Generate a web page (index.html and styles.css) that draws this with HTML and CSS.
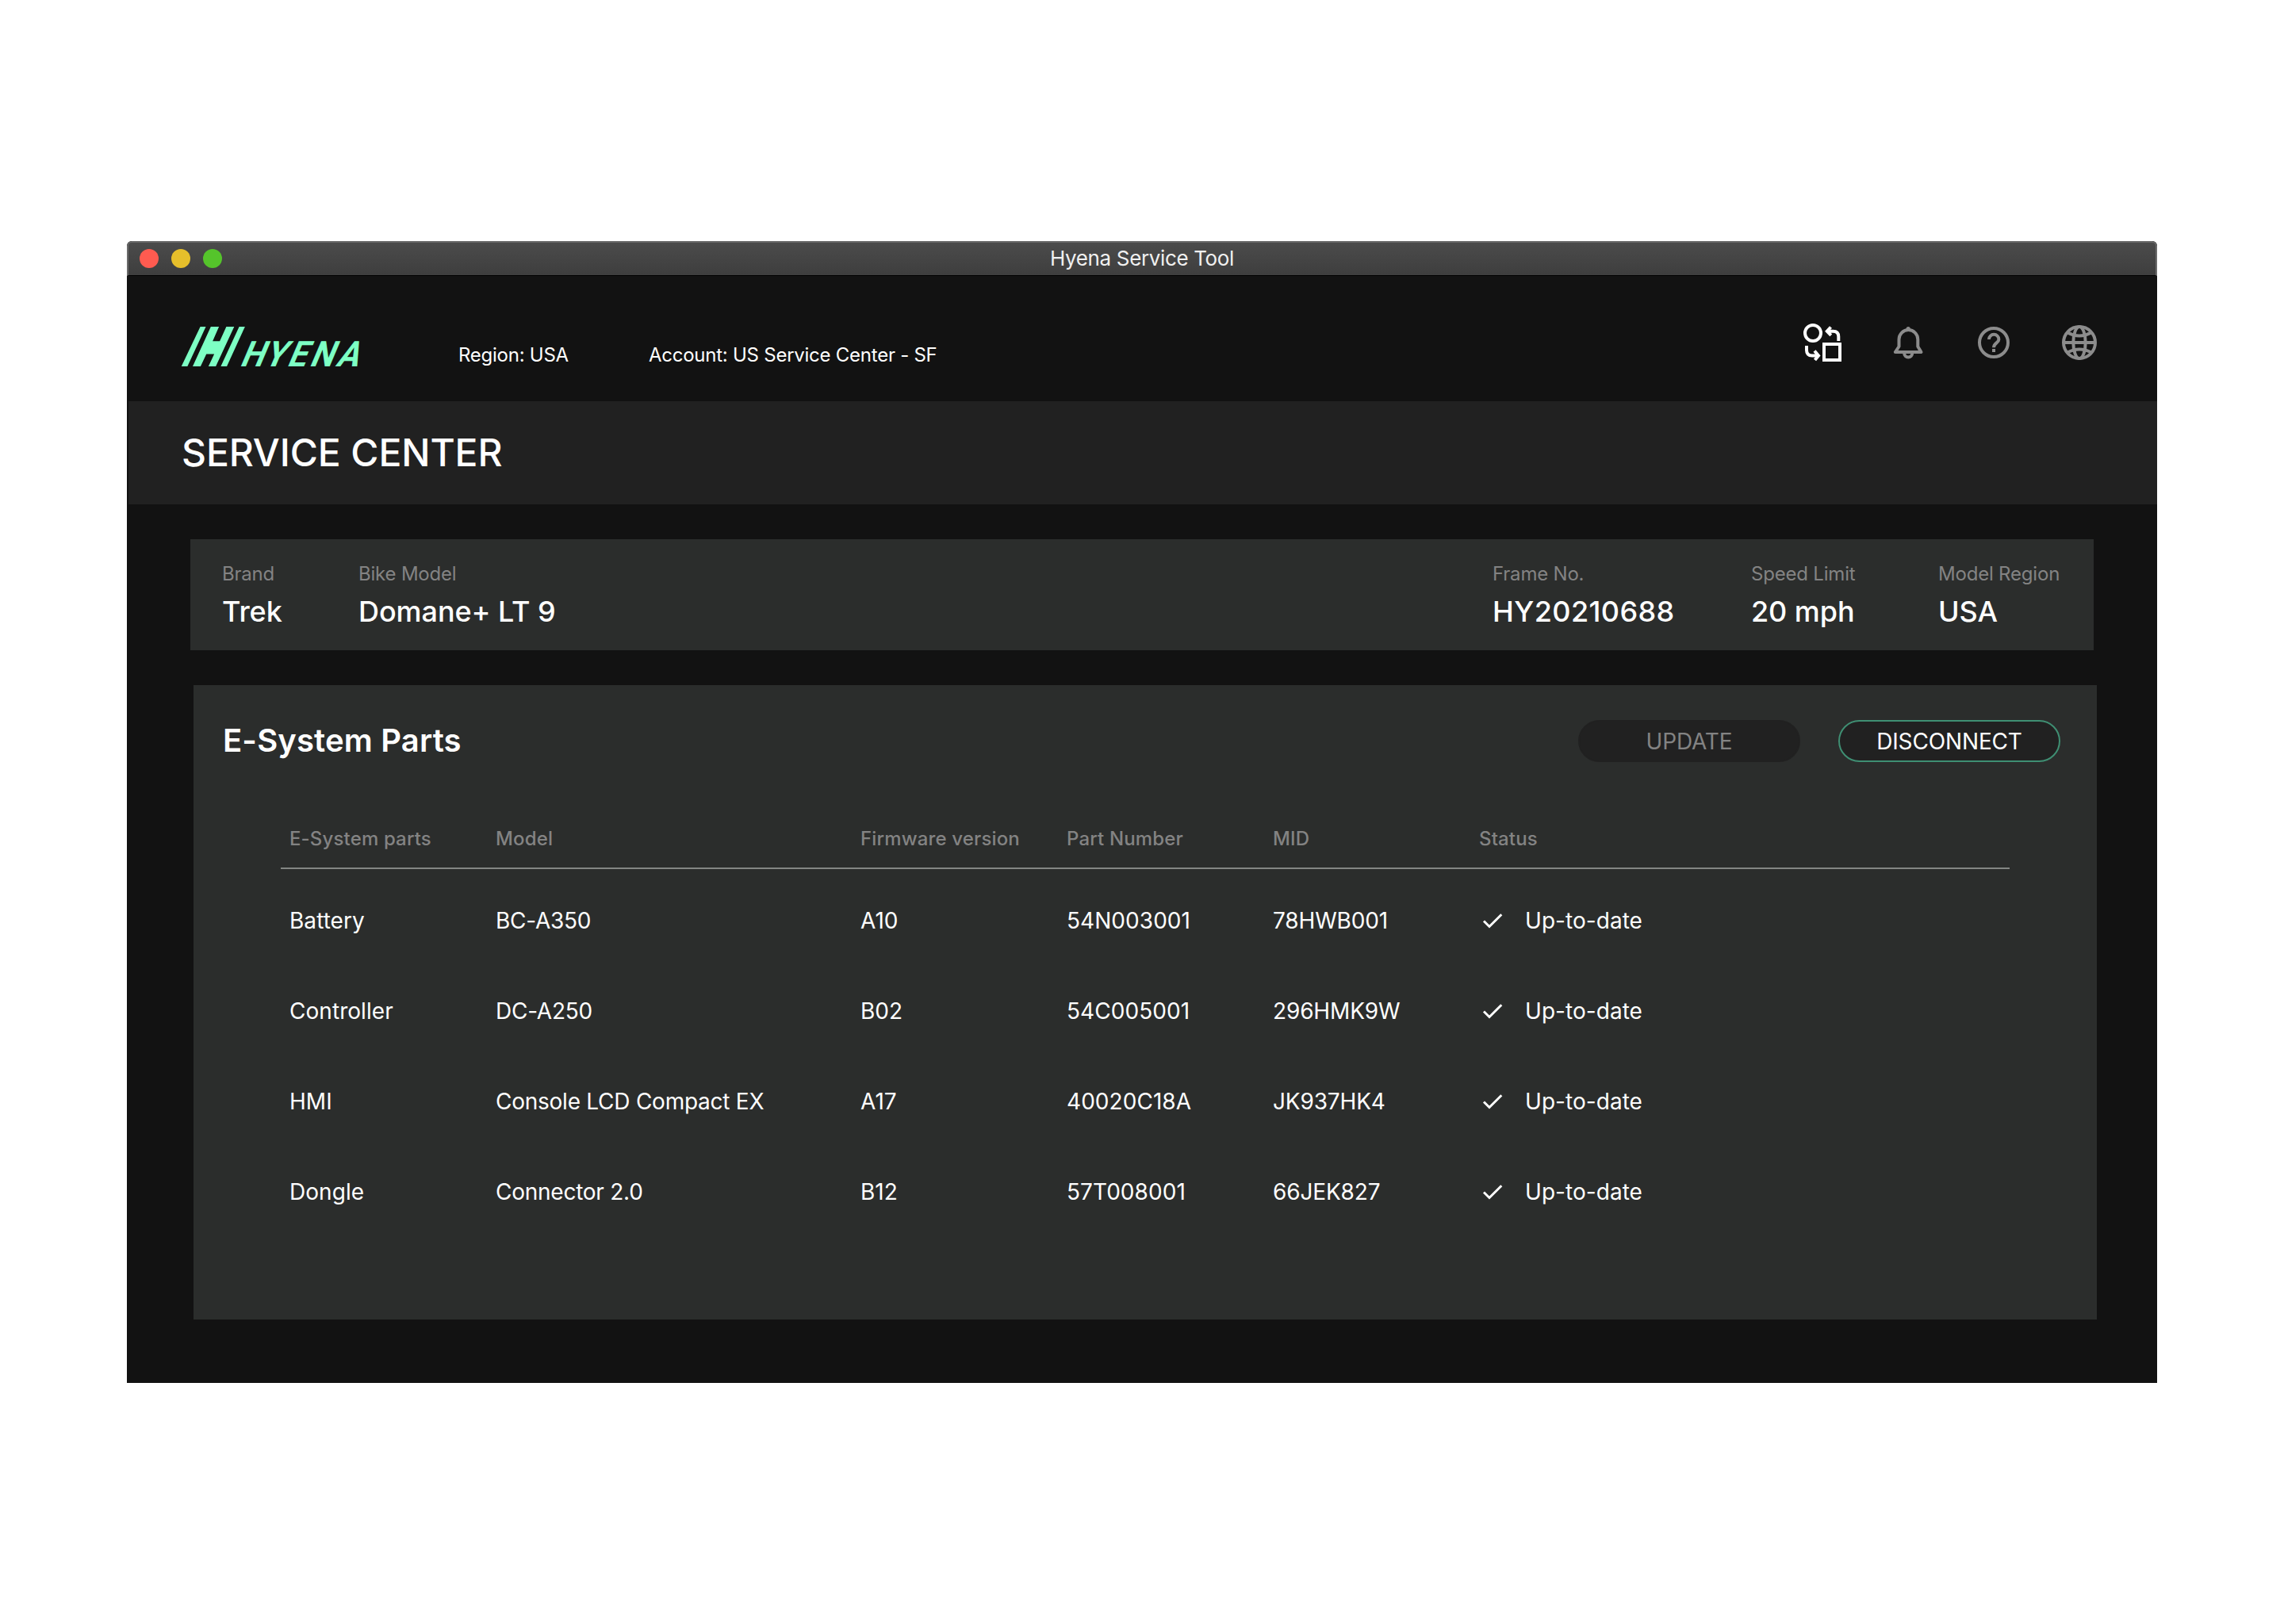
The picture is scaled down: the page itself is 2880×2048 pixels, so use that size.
FILE: index.html
```html
<!DOCTYPE html>
<html lang="en">
<head>
    <meta charset="UTF-8">
    <meta name="viewport" content="width=device-width, initial-scale=1.0">
    <title>Hyena Service Tool</title>
    <link rel="stylesheet" href="styles.css">
</head>
<body>
    <div class="window">
        <div class="titlebar">
            <div class="dots">
                <span class="dot dot-close"></span>
                <span class="dot dot-min"></span>
                <span class="dot dot-max"></span>
            </div>
            <div class="window-title">Hyena Service Tool</div>
        </div>

        <header class="header">
            <svg class="logo" viewBox="235 366 678 151">
                <polygon points="307,366 328,366 258,517 235,517"/>
                <polygon points="347,366 378,366 354,421 381,421 406,366 436,366 366,517 338,517 360,470 330,470 308,517 278,517"/>
                <polygon points="455,366 477,366 408,517 385,517"/>
                <text class="logo-text" transform="translate(0 517) skewX(-23) scale(.93 1)" x="488 586 681 773 882" y="0">HYENA</text>
            </svg>
            <div class="region">Region: USA</div>
            <div class="account">Account: US Service Center - SF</div>
            <nav class="icons">
                <svg class="icon active" viewBox="0 0 48 48">
                    <circle cx="12" cy="12" r="10"/>
                    <rect x="26" y="26" width="20" height="20"/>
                    <path d="M44.3 22v-5.5q0-6.8-6.8-6.8H30M34.5 4.5l-4.7 5.2 5 5.2"/>
                    <path d="M4 28v5.5q0 7 7 7h7M14 34.5l5 6-4.5 5.5"/>
                </svg>
                <svg class="icon" viewBox="0 0 48 48">
                    <path stroke-linejoin="round" d="M7.8 36l4.7-7V20a11.9 11.9 0 0 1 23.8 0v9l4.2 7z"/>
                    <path d="M19.2 37.5a5 5 0 0 0 10 0"/>
                    <circle class="solid" cx="24.2" cy="6.6" r="2.6"/>
                </svg>
                <svg class="icon" viewBox="0 0 48 48">
                    <circle cx="24" cy="24" r="18"/>
                    <path d="M18 20a6.2 6.2 0 0 1 12.4 0c0 4.3-6.4 4.6-6.4 10.2"/>
                    <rect class="solid" x="22" y="32" width="4" height="4"/>
                </svg>
                <svg class="icon" viewBox="0 0 48 48">
                    <circle cx="24" cy="24" r="20"/>
                    <ellipse cx="24" cy="24" rx="7.7" ry="20"/>
                    <path d="M4 24h40M9 11.5q15 8 30 0M9 36.5q15-8 30 0"/>
                </svg>
            </nav>
        </header>

        <div class="page-title">SERVICE CENTER</div>

        <section class="bike-info">
            <div class="field">
                <div class="label">Brand</div>
                <div class="value">Trek</div>
            </div>
            <div class="field">
                <div class="label">Bike Model</div>
                <div class="value">Domane+ LT 9</div>
            </div>
            <div class="field">
                <div class="label">Frame No.</div>
                <div class="value frame-no">HY20210688</div>
            </div>
            <div class="field">
                <div class="label">Speed Limit</div>
                <div class="value">20 mph</div>
            </div>
            <div class="field">
                <div class="label">Model Region</div>
                <div class="value">USA</div>
            </div>
        </section>

        <section class="parts">
            <div class="parts-header">
                <h2>E-System Parts</h2>
                <button class="btn btn-disabled">UPDATE</button>
                <button class="btn btn-outline">DISCONNECT</button>
            </div>

            <div class="table">
                <div class="row head">
                    <div>E-System parts</div>
                    <div>Model</div>
                    <div>Firmware version</div>
                    <div>Part Number</div>
                    <div>MID</div>
                    <div>Status</div>
                </div>
                <div class="row">
                    <div>Battery</div>
                    <div class="model">BC-A350</div>
                    <div>A10</div>
                    <div>54N003001</div>
                    <div class="mid">78HWB001</div>
                    <div class="status"><svg class="check" viewBox="0 0 28 28"><path d="M3 14.5l7 7L25.3 6.2"/></svg>Up-to-date</div>
                </div>
                <div class="row">
                    <div>Controller</div>
                    <div class="model">DC-A250</div>
                    <div>B02</div>
                    <div>54C005001</div>
                    <div class="mid">296HMK9W</div>
                    <div class="status"><svg class="check" viewBox="0 0 28 28"><path d="M3 14.5l7 7L25.3 6.2"/></svg>Up-to-date</div>
                </div>
                <div class="row">
                    <div>HMI</div>
                    <div class="model">Console LCD Compact EX</div>
                    <div>A17</div>
                    <div>40020C18A</div>
                    <div class="mid">JK937HK4</div>
                    <div class="status"><svg class="check" viewBox="0 0 28 28"><path d="M3 14.5l7 7L25.3 6.2"/></svg>Up-to-date</div>
                </div>
                <div class="row">
                    <div>Dongle</div>
                    <div class="model">Connector 2.0</div>
                    <div>B12</div>
                    <div>57T008001</div>
                    <div class="mid">66JEK827</div>
                    <div class="status"><svg class="check" viewBox="0 0 28 28"><path d="M3 14.5l7 7L25.3 6.2"/></svg>Up-to-date</div>
                </div>
            </div>
        </section>
    </div>
</body>
</html>
```
FILE: styles.css
```css
* {
    box-sizing: border-box;
}

body {
    margin: 0;
    padding-top: 304px;
    height: 2048px;
    background-color: #fff;
    font-family: 'Inter', sans-serif;
    color: #fff;
}

.window {
    width: 2560px;
    height: 1440px;
    margin: 0 auto;
    background-color: #121212;
    border-radius: 6px 6px 0 0;
    overflow: hidden;
}

/* title bar */
.titlebar {
    display: grid;
    grid-template-columns: 1fr auto 1fr;
    align-items: start;
    height: 44px;
    padding: 0 14px;
    background: linear-gradient(#4b4b4b, #3e3e3e);
    border: 2px solid #6a6a6a;
    border-bottom: 1px solid #000;
    border-radius: 6px 6px 0 0;
}

.dots {
    display: flex;
    gap: 16px;
    padding-top: 8px;
}

.dot {
    width: 24px;
    height: 24px;
    border-radius: 50%;
}

.dot-close {
    background-color: #ff5b50;
}

.dot-min {
    background-color: #e6bf2b;
}

.dot-max {
    background-color: #55c42b;
}

.window-title {
    font-size: 26px;
    line-height: 39px;
    letter-spacing: -0.36px;
    color: #f0f0f0;
}

/* header */
.header {
    display: flex;
    align-items: flex-start;
    height: 158px;
    padding: 60px 74px 0 68px;
    font-size: 24px;
    line-height: 30px;
    letter-spacing: -0.25px;
}

.logo {
    width: 226px;
    height: 50px;
    margin: 4px 124px 0 0;
    fill: #7dffc4;
    overflow: visible;
}

.logo-text {
    font-family: 'Roboto', sans-serif;
    font-size: 135px;
    font-weight: 700;
    letter-spacing: 0;
}

.region {
    width: 240px;
    margin-top: 25px;
}

.account {
    margin-top: 25px;
}

.icons {
    display: flex;
    gap: 60px;
    margin-left: auto;
}

.icon {
    width: 48px;
    height: 48px;
    fill: none;
    stroke: #8c8c8c;
    stroke-width: 4;
}

.icon.active {
    stroke: #fff;
}

.icon .solid {
    fill: #8c8c8c;
    stroke: none;
}

.page-title {
    height: 130px;
    margin-left: 2px;
    padding-left: 67px;
    background-color: #212121;
    font-size: 48px;
    font-weight: 500;
    line-height: 130px;
    letter-spacing: -0.12px;
}

/* bike info card */
.bike-info {
    display: grid;
    grid-template-columns: 172px 1430px 326px 236px auto;
    width: 2400px;
    height: 140px;
    margin: 44px 0 0 80px;
    padding: 29px 0 0 40px;
    background-color: #2b2d2c;
}

.label {
    font-size: 24px;
    line-height: 30px;
    letter-spacing: -0.2px;
    color: #838383;
}

.value {
    margin-top: 9px;
    font-size: 36px;
    font-weight: 500;
    line-height: 46px;
    letter-spacing: -0.06px;
}

.frame-no {
    letter-spacing: 0.4px;
}

/* parts panel */
.parts {
    width: 2400px;
    height: 800px;
    margin: 44px 0 0 84px;
    padding: 44px 46px 0 37px;
    background-color: #2b2d2c;
}

.parts-header {
    display: flex;
    align-items: flex-start;
    gap: 48px;
}

h2 {
    margin: 0 auto 0 0;
    font-size: 40px;
    font-weight: 600;
    line-height: 51px;
    letter-spacing: 0.15px;
}

.btn {
    width: 280px;
    height: 53px;
    padding: 0;
    border: 2px solid #212121;
    border-radius: 27px;
    background-color: #212121;
    font-family: inherit;
    font-size: 28px;
    letter-spacing: -0.15px;
}

.btn-disabled {
    color: #838383;
}

.btn-outline {
    border-color: #3f8f73;
    color: #fff;
}

.table {
    width: 2180px;
    margin: 59px 0 0 73px;
}

.row {
    display: grid;
    grid-template-columns: 260px 460px 260px 260px 260px auto;
    align-items: center;
    height: 114px;
    padding-left: 11px;
    font-size: 28px;
    letter-spacing: 0.05px;
}

.row.head {
    height: 76px;
    margin-bottom: 8px;
    border-bottom: 2px solid #838683;
    font-size: 24px;
    font-weight: 500;
    letter-spacing: 0.15px;
    color: #838383;
}

.model {
    letter-spacing: -0.25px;
}

.mid {
    letter-spacing: -0.15px;
}

.status {
    display: flex;
    align-items: center;
    gap: 27px;
    padding-left: 3px;
}

.check {
    width: 28px;
    height: 28px;
    fill: none;
    stroke: #fff;
    stroke-width: 3;
}
```
